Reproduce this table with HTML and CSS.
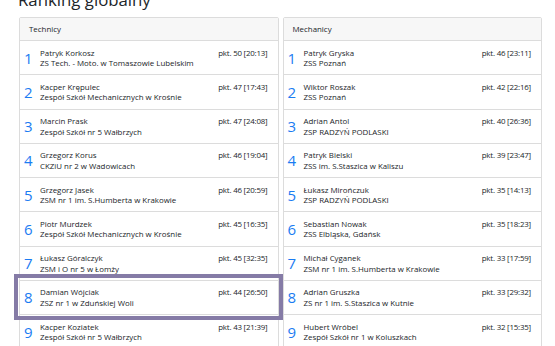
FILE: index.html
```html
<!DOCTYPE html>
<html lang="pl">
<head>
<meta charset="utf-8">
<title>Ranking globalny</title>
<link rel="stylesheet" href="styles.css">
</head>
<body>
<div class="page">
  <h4 class="title">Ranking globalny</h4>
  <div class="columns">
    <div class="card">
      <div class="card-header">Technicy</div>
      <ul class="list">
        <li class="item"><span class="pos">1</span><div class="who"><div>Patryk Korkosz</div><div>ZS Tech. - Moto. w Tomaszowie Lubelskim</div></div><span class="pts">pkt. 50 [20:13]</span></li>
        <li class="item"><span class="pos">2</span><div class="who"><div>Kacper Krępulec</div><div>Zespół Szkół Mechanicznych w Krośnie</div></div><span class="pts">pkt. 47 [17:43]</span></li>
        <li class="item"><span class="pos">3</span><div class="who"><div>Marcin Prask</div><div>Zespół Szkół nr 5 Wałbrzych</div></div><span class="pts">pkt. 47 [24:08]</span></li>
        <li class="item"><span class="pos">4</span><div class="who"><div>Grzegorz Korus</div><div>CKZiU nr 2 w Wadowicach</div></div><span class="pts">pkt. 46 [19:04]</span></li>
        <li class="item"><span class="pos">5</span><div class="who"><div>Grzegorz Jasek</div><div>ZSM nr 1 im. S.Humberta w Krakowie</div></div><span class="pts">pkt. 46 [20:59]</span></li>
        <li class="item"><span class="pos">6</span><div class="who"><div>Piotr Murdzek</div><div>Zespół Szkół Mechanicznych w Krośnie</div></div><span class="pts">pkt. 45 [16:35]</span></li>
        <li class="item"><span class="pos">7</span><div class="who"><div>Łukasz Góralczyk</div><div>ZSM i O nr 5 w Łomży</div></div><span class="pts">pkt. 45 [32:35]</span></li>
        <li class="item item-me"><span class="pos">8</span><div class="who"><div>Damian Wójciak</div><div>ZSZ nr 1 w Zduńskiej Woli</div></div><span class="pts">pkt. 44 [26:50]</span></li>
        <li class="item"><span class="pos">9</span><div class="who"><div>Kacper Koziatek</div><div>Zespół Szkół nr 5 Wałbrzych</div></div><span class="pts">pkt. 43 [21:39]</span></li>
      </ul>
    </div>
    <div class="card">
      <div class="card-header">Mechanicy</div>
      <ul class="list">
        <li class="item"><span class="pos">1</span><div class="who"><div>Patryk Gryska</div><div>ZSS Poznań</div></div><span class="pts">pkt. 46 [23:11]</span></li>
        <li class="item"><span class="pos">2</span><div class="who"><div>Wiktor Roszak</div><div>ZSS Poznań</div></div><span class="pts">pkt. 42 [22:16]</span></li>
        <li class="item"><span class="pos">3</span><div class="who"><div>Adrian Antol</div><div>ZSP RADZYŃ PODLASKI</div></div><span class="pts">pkt. 40 [26:36]</span></li>
        <li class="item"><span class="pos">4</span><div class="who"><div>Patryk Bielski</div><div>ZSS im. S.Staszica w Kaliszu</div></div><span class="pts">pkt. 39 [23:47]</span></li>
        <li class="item"><span class="pos">5</span><div class="who"><div>Łukasz Mirończuk</div><div>ZSP RADZYŃ PODLASKI</div></div><span class="pts">pkt. 35 [14:13]</span></li>
        <li class="item"><span class="pos">6</span><div class="who"><div>Sebastian Nowak</div><div>ZSS Elbląska, Gdańsk</div></div><span class="pts">pkt. 35 [18:23]</span></li>
        <li class="item"><span class="pos">7</span><div class="who"><div>Michał Cyganek</div><div>ZSM nr 1 im. S.Humberta w Krakowie</div></div><span class="pts">pkt. 33 [17:59]</span></li>
        <li class="item"><span class="pos">8</span><div class="who"><div>Adrian Gruszka</div><div>ZS nr 1 im. S.Staszica w Kutnie</div></div><span class="pts">pkt. 33 [29:32]</span></li>
        <li class="item"><span class="pos">9</span><div class="who"><div>Hubert Wróbel</div><div>Zespół Szkół nr 1 w Koluszkach</div></div><span class="pts">pkt. 32 [15:35]</span></li>
      </ul>
    </div>
  </div>
</div>
</body>
</html>
```
FILE: styles.css
```css
html, body {
  margin: 0;
  padding: 0;
  background: #fff;
}
body {
  font-family: "Open Sans", "Noto Sans", sans-serif;
  color: #212529;
  font-size: 7.9px;
  line-height: 10.5px;
}
.page {
  padding: 0 13px 0 18px;
}
.title {
  margin: -10px 0 7px 0;
  font-size: 16.8px;
  line-height: 20px;
  font-weight: 400;
  color: #212529;
}
.columns {
  display: grid;
  grid-template-columns: 1fr 1fr;
  gap: 4px;
  margin-left: 1px;
}
.card {
  border: 1px solid #dcdcdc;
  border-radius: 2px;
  background: #fff;
}
.card-header {
  background: #f7f7f7;
  border-bottom: 1px solid #dcdcdc;
  padding: 5.5px 9px;
  line-height: 11px;
}
.list {
  list-style: none;
  margin: 0;
  padding: 0;
}
.item {
  position: relative;
  display: flex;
  align-items: center;
  padding: 6.5px 10px 5.75px 4px;
  border-bottom: 1px solid #dcdcdc;
  background: #fff;
}
.pos {
  width: 16px;
  flex: none;
  font-size: 15px;
  line-height: 15px;
  color: #1b7cf2;
}
.who {
  flex: 1;
  white-space: nowrap;
}
.pts {
  align-self: flex-start;
  white-space: nowrap;
  letter-spacing: -0.2px;
}
.item-me::after {
  content: "";
  position: absolute;
  top: -7px;
  bottom: -6px;
  left: -6px;
  right: -5px;
  border: 4px solid #857ba6;
  z-index: 2;
  pointer-events: none;
}
```
